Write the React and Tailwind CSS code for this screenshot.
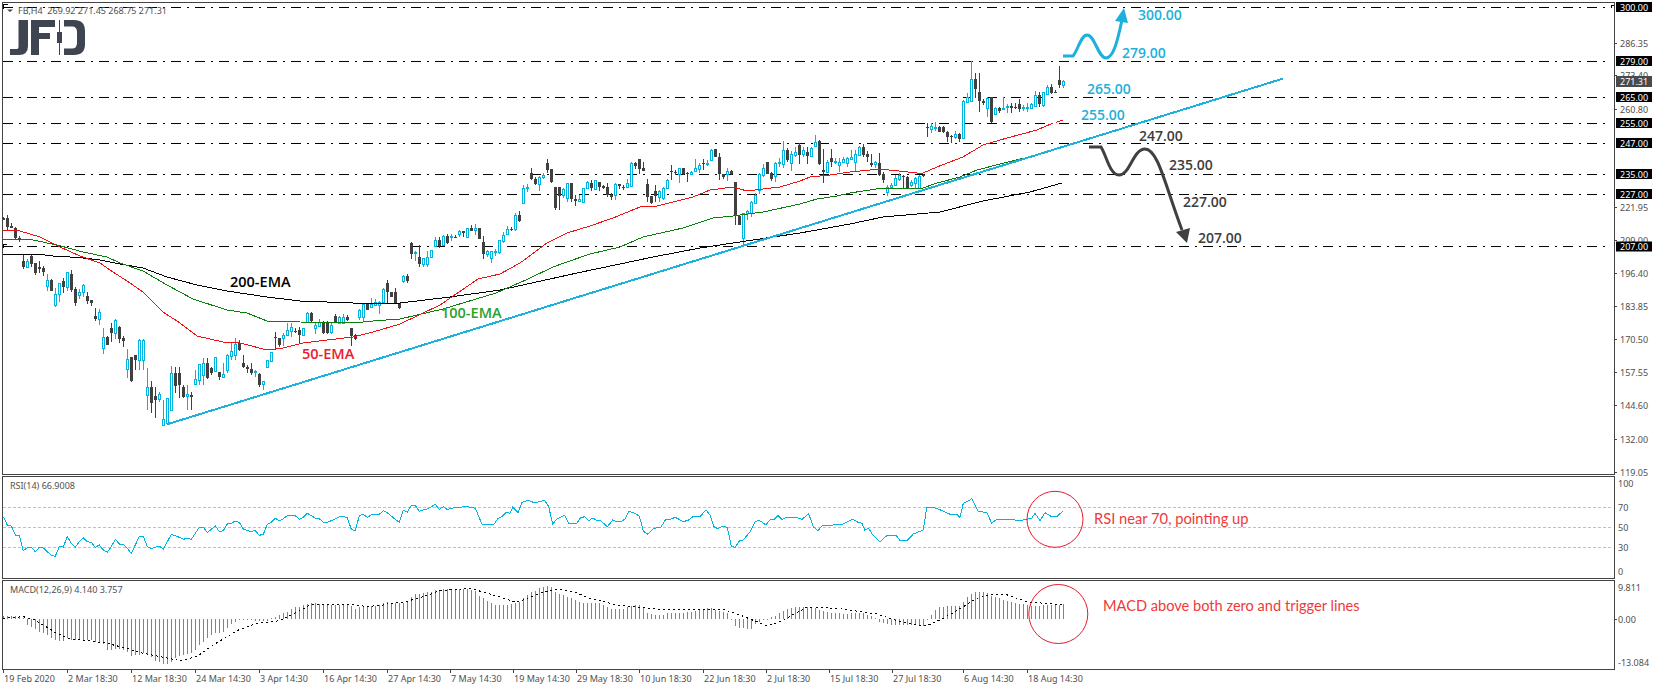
// Facebook H4 chart, traced from the reference. Traced numbers are in 3x crop units: x = ox + z/3, y = oy + z/3
const CYAN = "#00b4e0";
const DARK = "#404040";

const candleSegments = [
  { x0: 3, oy: 195, rows: [[0,66,68,74,76],[0,60,70,96,105],[0,84,94,99,100],[0,96,100,130,132],[0,122,129,131,140],[0,180,198,216,222],[1,192,198,215,218],[0,180,183,208,216],[0,205,205,233,240],[0,198,216,222,234],[0,214,219,231,243],[1,237,256,272,287],[0,252,255,288,288],[1,280,298,329,336],[1,265,265,298,320],[0,250,258,276,293],[1,232,232,275,288],[0,226,238,285,290],[0,276,282,323,333],[1,281,291,299,311],[1,266,270,290,306],[0,292,303,318,328],[0,316,316,323,333],[0,339,363,372,378],[1,342,352,371,389],[1,400,427,458,477],[0,422,427,449,450],[0,384,399,414,442],[1,372,376,413,432],[0,392,396,431,445],[0,422,429,437,456],[1,462,493,521,548]] },
  { x0: 131, oy: 260, rows: [[0,290,292,362,365],[0,285,285,300,330],[1,238,240,300,330],[1,238,240,300,330],[1,323,380,406,450],[0,362,380,430,460],[0,380,408,420,475],[1,395,402,416,425],[1,420,478,495,495],[1,415,415,490,495],[1,318,340,450,450],[0,320,340,378,400],[0,322,340,375,415],[0,375,380,410,415],[1,375,403,407,450],[0,395,405,412,450],[1,330,358,372,375],[1,312,312,360,375],[1,295,310,345,375],[0,295,310,355,358],[0,320,325,340,345],[1,290,290,333,335],[0,335,335,350,360],[1,310,343,350,350],[1,283,285,330,340],[1,250,272,288,300],[1,235,252,285,300],[0,240,248,270,272],[0,285,310,320,325],[0,315,320,328,340],[0,310,328,338,345],[1,330,333,337,350],[0,340,343,375,380],[1,363,363,373,390],[1,300,300,322,325],[1,275,275,302,305],[0,215,232,235,270],[0,235,235,255,262],[1,218,225,235,258],[1,190,210,225,228],[1,188,200,212,230],[0,205,212,214,220],[0,200,210,225,248],[1,205,205,225,225],[1,155,160,185,190],[0,155,160,182,185],[1,190,195,205,222],[1,178,185,197,200],[0,182,185,218,222],[0,182,185,218,222],[1,185,195,215,222],[0,162,168,187,190],[1,168,170,188,190],[1,162,170,188,190],[0,165,170,180,182],[0,203,205,228,258],[0,222,225,238,240],[1,148,150,172,180],[1,130,132,172,185],[0,130,132,150,150],[1,115,133,140,145],[1,118,125,136,136],[1,122,125,134,162],[1,85,87,125,128],[0,60,70,95,130],[0,97,97,110,112],[0,85,97,130,133],[0,130,130,145,148]] },
  { x0: 403, oy: 120, rows: [[1,465,468,482,490],[0,462,468,482,490],[0,365,368,402,418],[1,393,395,398,422],[0,375,411,432,440],[1,413,413,432,440],[1,393,410,432,440],[1,390,390,412,413],[1,350,360,378,380],[0,352,360,378,385],[1,345,348,375,378],[0,343,347,368,372],[1,342,347,350,362],[0,345,350,352,354],[1,330,334,341,352],[0,334,334,338,350],[1,325,325,350,350],[0,315,323,332,332],[1,312,325,329,345],[0,323,323,357,358],[0,348,366,402,418],[1,390,393,401,412],[1,393,393,413,430],[1,388,393,395,408],[1,360,360,395,403],[1,335,345,362,370],[1,318,327,342,345],[0,322,327,331,333],[1,278,286,328,332],[0,273,286,302,305],[1,195,205,250,252],[1,192,202,205,215],[0,145,160,177,180],[0,170,176,192,196],[1,168,170,193,212],[1,158,165,172,178],[0,118,130,150,160],[0,148,148,186,188],[0,200,202,263,270],[0,202,202,227,270],[1,205,208,225,235],[1,190,190,235,245],[0,190,190,238,245],[0,225,238,242,258],[1,225,238,243,247],[1,203,203,247,250],[1,182,187,204,208],[0,180,190,205,212],[1,180,180,206,208],[0,187,187,200,212],[0,195,197,203,208],[0,190,202,225,232],[0,220,225,230,240],[1,190,193,226,240],[0,193,193,198,208],[0,195,200,203,210],[1,178,190,202,205],[1,127,130,197,200],[0,125,130,138,148],[0,118,118,147,162],[0,125,145,152,152],[0,178,192,230,245],[0,228,228,248,252],[0,195,213,228,245],[1,210,214,230,245],[1,200,205,233,240],[1,178,180,205,207],[0,135,152,155,180],[0,150,155,158,165],[1,143,145,163,188],[0,145,145,163,165],[0,155,158,162,185],[1,153,157,163,165],[1,118,145,152,155],[1,130,135,147,160],[0,118,130,133,150],[1,120,130,133,138],[1,88,90,120,122],[0,88,88,110,112],[0,100,112,163,180],[0,163,163,170,178],[1,145,153,163,182],[0,150,153,162,165],[0,187,187,288,315],[0,288,288,315,315],[1,278,280,355,378],[1,270,273,280,300],[1,243,247,280,290],[1,220,225,248,250],[1,160,162,210,222],[1,133,145,165,170],[0,125,125,162,163]] },
  { x0: 771, oy: 110, rows: [[0,185,190,207,212],[1,155,160,197,215],[1,143,155,160,172],[1,93,120,163,175],[0,115,120,150,157],[1,123,133,160,182],[1,112,127,134,140],[0,100,105,135,162],[1,110,120,133,140],[0,110,125,137,162],[1,110,115,137,140],[1,75,95,107,110],[0,90,93,162,165],[0,118,181,185,218],[1,150,157,185,187],[0,118,145,157,170],[1,145,152,157,162],[1,145,155,166,187],[1,140,148,155,160],[1,140,145,158,170],[1,120,140,146,150],[1,120,133,155,187],[1,108,110,135,137],[0,102,110,135,140],[0,122,133,142,157],[0,133,160,165,170],[1,152,156,163,175],[0,130,160,195,198],[0,187,193,210,218],[1,225,230,247,258],[1,218,225,230,235],[1,195,205,225,228],[1,190,195,207,212]] },
  { x0: 903, oy: 40, rows: [[0,405,408,412,445],[0,407,410,445,445],[1,420,427,435,440],[1,412,415,430,445],[1,405,408,445,448],[0,403,405,408,412],[0,250,261,263,290],[1,250,258,268,280],[1,245,261,264,272],[0,258,260,275,276],[0,258,260,275,278],[0,272,275,290,305],[0,285,288,292,308],[1,272,283,290,296],[0,280,282,297,305],[1,180,183,295,298],[1,160,170,185,190],[1,63,118,183,185],[0,100,118,146,175],[0,100,155,183,215],[0,178,182,190,195],[1,172,175,203,232],[0,172,172,245,250],[1,200,205,222,225],[0,200,204,214,218],[1,170,203,205,208],[1,192,197,200,218],[0,190,197,203,218],[0,190,200,205,208],[0,178,193,207,215],[1,195,202,204,212],[1,190,200,205,217],[1,190,192,203,205],[1,152,165,197,200],[0,155,165,192,202],[1,155,157,196,200],[1,135,142,162,165],[0,132,142,160,162],[0,150,155,157,158],[0,78,120,135,143],[1,120,124,135,143]] },
];

const candles = candleSegments.flatMap(({ x0, oy, rows }) =>
  rows.map(([up, wt, bt, bb, wb], i) => ({
    x: x0 + i * 4,
    up: !!up,
    wt: Math.round(oy + wt / 3),
    bt: Math.round(oy + bt / 3),
    bb: Math.round(oy + bb / 3),
    wb: Math.round(oy + wb / 3),
  }))
);

const redEma = "3,230 20,231 40,237 60,247 80,256 100,263 110,270 130,283 143,292 163,312 180,323 197,336 223,342 240,343 267,350 283,348 303,343 327,340 353,337 373,332 400,324 440,305 478,279 500,274 520,263 547,243 567,233 590,226 613,218 640,207 657,206 693,197 710,190 733,187 747,191 763,189 780,187 800,181 810,177 830,175 850,172 880,169 917,173 923,173 937,167 963,157 983,145 1007,138 1037,130 1053,123";
const redEmaTail = "1056,122.5 1063,120";
const greenEma = "3,239 33,240 57,245 83,252 107,257 120,263 143,271 167,285 193,299 227,310 247,313 267,321 300,322 353,323 373,321 400,319 443,309 496,293 528,279 553,267 567,262 590,254 620,247 643,237 683,228 713,218 733,216 763,212 800,204 817,199 837,196 850,193 883,188 923,188 937,183 960,177 977,170 1000,164 1037,155 1063,146";
const blackEma = "3,255 10,254 37,254 53,256 70,257 83,258 100,260 120,264 143,268 167,277 197,285 227,291 267,297 300,301 353,303 400,303 450,297 500,290 550,279 577,273 620,264 653,257 700,248 733,243 800,233 850,224 883,217 940,212 983,201 1030,192 1062,183";

const trace = (ox, oy, flat) => {
  const out = [];
  for (let i = 0; i < flat.length; i += 2) out.push(`${(ox + flat[i] / 3).toFixed(1)},${(oy + flat[i + 1] / 3).toFixed(1)}`);
  return out.join(" ");
};

const rsiLine = [
  trace(0, 470, [10,140,22,165,34,168,46,195,58,197,70,242,82,233,94,232,106,245,118,232,130,234,142,245,154,255,166,259,178,230,190,231,202,200,214,220,226,232,238,215,250,203,262,215,274,217,286,232,298,225,310,240,322,247,334,230,346,208,358,222,370,223,382,235,394,250,406,225,418,198,430,198,442,230,454,236,466,232,478,228,490,238,514,193,526,197,538,202,550,208,562,205,574,208,586,190,598,172,610,172,622,187,634,178,646,167,658,185,670,182,682,162,694,160,706,153,718,157,730,177,742,182,754,184,766,182,778,196,790,193,802,163,814,157,826,145,838,153,850,146,862,137,874,135,886,137,898,148,910,142,922,130,934,137,946,144,958,146,970,157]),
  trace(0, 470, [982,157,994,152,1006,146,1018,140,1030,139,1042,143,1054,178,1066,182,1078,137,1090,133,1102,142,1114,135,1126,133,1138,133,1150,122,1162,128]),
  trace(390, 470, [12,145,28,157,40,120,52,127,64,106,76,106,88,124,100,120,112,117,124,110,136,103,148,118,160,110,172,119,184,115,196,113,208,113,220,110,232,110,248,113,256,115,276,163,288,163,312,163,324,145,336,140,348,127,360,130,368,112,384,128,396,97,416,91,432,98,448,95,464,91,476,110,488,163,500,147,524,136,536,160,548,162,560,160,572,143,584,140,596,152,608,144,620,151,632,152,652,170,668,150,680,156,692,155,704,148,716,125,728,127,748,138,760,183,772,193,792,175,812,172,828,147,840,148,856,142,880,155,896,150,908,140,932,138,948,119,960,135,972,170,984,176,1000,168,1012,172,1024,228,1036,232,1048,213,1060,210,1080,185,1096,155,1108,151,1128,165,1140,149,1152,149,1164,137,1176,148,1188,143,1220,143,1236,148,1256,131,1270,170,1284,182,1296,168,1320,166,1360,162,1388,147,1404,157,1416,160,1424,180,1436,175,1448,195,1470,215,1490,197,1518,195,1530,212]),
  trace(900, 470, [20,212,40,192,70,180,80,112,100,112,130,123,150,133,170,133,180,142,190,100,210,90,215,85,235,125,260,127,275,160,290,148,310,148,345,150,360,152,380,148,395,145,405,130,420,152,435,128,455,140,470,140,488,124]),
].join(" ");

const signalLine = [
  trace(0, 470, [10,445,70,440,100,448,130,465,170,490,210,507,270,512,320,520,380,535,420,548,470,558,540,572,590,560,640,525,710,482,770,460,840,452,880,432,930,405,1060,403,1100,410,1150,405]),
  trace(390, 470, [0,400,40,397,100,380,150,362,240,355,310,375,380,397,450,370,500,358,550,365,600,385,680,405,830,420,1000,418,1050,435,1130,467,1170,455,1250,412,1340,415,1460,432,1530,455]),
  trace(900, 470, [0,455,50,465,85,465,130,445,190,410,230,385,280,372,320,374,380,395,490,405]),
].join(" ");

const histSegments = [
  { x0: 3, vals: [437,437,437,438,440,443,465,470,478,485,490,495,505,510,512,512,505,510,510,510,510,510,510,515,520,522,540,540,538,538,540,545,558,555,555,550,553,560,572,575,582,582,575,565,558,555,552,550,540,525,515,505,495,490,488,485,475,462,455,451,451,451,451,452,452,452,452,445,440,435,430,425,418,412,410,405,403,400,400,402,405,405,405,405,405,405,405,408,418,412,410,408,408,408,405,398,396,398,400,400] },
  { x0: 403, vals: [400,395,380,372,372,370,367,366,360,360,358,358,357,357,357,357,358,360,362,378,385,392,398,405,405,405,405,403,398,395,385,375,365,362,355,352,348,350,365,372,375,380,385,390,397,398,398,398,400,400,405,410,416,416,416,418,410,408,405,405,415,428,432,435,436,435,430,428,428,428,428,425,425,423,420,420,415,413,420,423,425,428,447,468,473,475,477,477,463,455,450,448,442,437,430,422,418,415,412,410,412,410,412,415,420,423,427,428,428,430,431,431,430,428,428,430,435,437,445,455,460,462,465,465,465,465,465,465] },
  { x0: 915, vals: [465,465,468,450,435,420,412,410,408,408,408,408,395,382,372,365,365,367,370,378,380,385,390,393,397,400,402,403,405,407,408,408,405,405,405,405,405,402] },
];
const histBars = histSegments.flatMap(({ x0, vals }) =>
  vals.map((v, i) => ({ x: x0 + i * 4, y: 470 + v / 3 }))
);

const levels = [7, 61, 97, 123, 143, 174, 194, 246.5];

const priceScale = [
  [43, "286.35"], [75, "273.40"], [109, "260.80"], [207, "221.95"], [240, "209.00"], [273, "196.40"],
  [306, "183.85"], [339, "170.50"], [372, "157.55"], [405, "144.60"], [439, "132.00"], [472, "119.05"],
];
const priceTags = [[7, "300.00"], [61, "279.00"], [97, "265.00"], [123, "255.00"], [143, "247.00"], [174, "235.00"], [194, "227.00"], [246.5, "207.00"]];

const levelNotes = [
  [1138, 15, "300.00", "fill-[#1cb0dc]"], [1122, 53, "279.00", "fill-[#1cb0dc]"], [1087, 89, "265.00", "fill-[#1cb0dc]"], [1081, 115, "255.00", "fill-[#1cb0dc]"],
  [1139, 136, "247.00", "fill-[#3d3d3d]"], [1169, 165, "235.00", "fill-[#3d3d3d]"], [1183, 202, "227.00", "fill-[#3d3d3d]"], [1198, 238, "207.00", "fill-[#3d3d3d]"],
];
const emaNotes = [
  [230, 282, "200-EMA", "fill-black"], [441, 313, "100-EMA", "fill-[#2ba02b]"], [302, 354, "50-EMA", "fill-[#e8202c]"],
];

const dates = [
  [3, "19 Feb 2020"], [67, "2 Mar 18:30"], [131, "12 Mar 18:30"], [195, "24 Mar 14:30"], [259, "3 Apr 14:30"], [323, "16 Apr 14:30"], [387, "27 Apr 14:30"],
  [450, "7 May 14:30"], [513, "19 May 14:30"], [576, "29 May 18:30"], [639, "10 Jun 18:30"], [703, "22 Jun 18:30"], [766, "2 Jul 18:30"], [829, "15 Jul 18:30"],
  [892, "27 Jul 18:30"], [963, "6 Aug 14:30"], [1027, "18 Aug 14:30"],
];

function Candles() {
  return (
    <g shapeRendering="crispEdges">
      {candles.map((c) => {
        const color = c.up ? CYAN : DARK;
        const h = Math.max(c.bb - c.bt, 1);
        return (
          <g key={c.x} fill={color}>
            <rect x={c.x} y={c.wt} width="1" height={Math.max(c.wb - c.wt, 1)} />
            <rect x={c.x - 1} y={c.bt} width="3" height={h + (c.up ? 1 : 0)} />
            {c.up && h > 1 && <rect x={c.x} y={c.bt + 1} width="1" height={h - 1} fill="#fff" />}
          </g>
        );
      })}
    </g>
  );
}

function Logo() {
  return (
    <g fill="#3e4550">
      <path d="M18.5 20H28V46Q28 55 19 55H10V49H17Q18.5 49 18.5 47Z" />
      <path d="M31 20H55V27H39V33H50V39H39V55H31Z" />
      <rect x="59" y="20" width="1" height="35" />
      <rect x="57" y="32" width="5" height="11" />
      <path d="M64 20H74Q85 20 85 31V44Q85 55 74 55H64V48.5H72Q77 48.5 77 43V32Q77 26.5 72 26.5H64Z" />
    </g>
  );
}

function MainChart() {
  return (
    <svg viewBox="3 3 1611 471" className="block h-full w-full overflow-hidden">
      <Logo />
      <g stroke="#000" strokeWidth="1" strokeDasharray="10 6 2 6" shapeRendering="crispEdges">
        {levels.map((y) => (
          <line key={y} x1="3" x2="1611" y1={Math.floor(y) + 0.5} y2={Math.floor(y) + 0.5} />
        ))}
      </g>
      <path d="M3 248V244.5H7M1611 8V5.5H1614" fill="none" stroke="#000" shapeRendering="crispEdges" />
      <Candles />
      <g fill="none" strokeWidth="1" shapeRendering="crispEdges">
        <polyline points={blackEma} stroke="#000" />
        <polyline points={greenEma} stroke="#0a7d0a" />
        <polyline points={redEma} stroke="#f01010" />
        <polyline points={redEmaTail} stroke="#f01010" />
      </g>
      <line x1="168" y1="424" x2="1283" y2="78.6" stroke="#1cb0dc" strokeWidth="2" shapeRendering="crispEdges" />
      <path d="M1063 56H1073C1078 50 1081 35 1087 35C1095 35 1098 58 1106 58C1114 58 1118 38 1122 20" fill="none" stroke="#1cb0dc" strokeWidth="3" />
      <path d="M1124 8L1128 23L1115 21Z" fill="#1cb0dc" />
      <path d="M1089 147H1101C1107 157 1110 175 1119 175C1130 175 1133 149 1145 149C1158 149 1165 185 1182 230" fill="none" stroke={DARK} strokeWidth="3" />
      <path d="M1187 243L1176 232L1190 228Z" fill={DARK} />
      <g className="font-['Open_Sans'] text-[14px] font-semibold">
        {levelNotes.map(([x, y, label, color]) => (
          <text key={label} x={x} y={y + 5} className={color}>{label}</text>
        ))}
      </g>
      <g className="font-['Open_Sans'] text-[14.5px] font-semibold">
        {emaNotes.map(([x, y, label, color]) => (
          <text key={label} x={x} y={y + 5} className={color}>{label}</text>
        ))}
      </g>
      <path d="M3 9V4H8" fill="none" stroke="#000" shapeRendering="crispEdges" />
      <path d="M7 9.5H13L10 12Z" fill="#444" />
      <text x="18" y="14" xmlSpace="preserve" className="font-['Noto_Sans'] text-[9px] fill-[#505050]">FB,H4  269.92 271.45 268.75 271.31</text>
    </svg>
  );
}

function RsiChart() {
  return (
    <svg viewBox="3 477 1611 101" className="block h-full w-full overflow-hidden">
      <g stroke="#c0c0c0" strokeDasharray="3 2" shapeRendering="crispEdges">
        {[507.5, 527.5, 547.5].map((y) => (
          <line key={y} x1="3" x2="1612" y1={y} y2={y} />
        ))}
      </g>
      <polyline points={rsiLine} fill="none" stroke={CYAN} shapeRendering="crispEdges" />
      <circle cx="1055" cy="519.3" r="28" fill="none" stroke="#e8192c" />
      <text x="1094" y="524" className="font-['Lato'] text-[14.7px] fill-[#ee3a3a]">RSI near 70, pointing up</text>
      <text x="10" y="489" className="font-['Noto_Sans'] text-[9px] fill-[#505050]">RSI(14) 66.9008</text>
    </svg>
  );
}

function MacdChart() {
  return (
    <svg viewBox="3 581 1611 88" className="block h-full w-full overflow-hidden">
      <g fill="#1aa8cc" shapeRendering="crispEdges">
        {histBars.map((b) => (
          <rect key={b.x} x={b.x} y={Math.min(b.y, 619)} width="1" height={Math.max(Math.abs(b.y - 619), 1)} />
        ))}
      </g>
      <polyline points={signalLine} fill="none" stroke="#000" strokeDasharray="2 3" shapeRendering="crispEdges" />
      <circle cx="1058.3" cy="614" r="29.5" fill="none" stroke="#e8192c" />
      <text x="1103" y="611" className="font-['Lato'] text-[14.6px] fill-[#ee3a3a]">MACD above both zero and trigger lines</text>
      <text x="10" y="593" className="font-['Noto_Sans'] text-[9px] fill-[#505050]">MACD(12,26,9) 4.140 3.757</text>
    </svg>
  );
}

function PriceAxis() {
  return (
    <svg viewBox="1615 2 40 473" className="block h-full w-full overflow-visible font-['Noto_Sans'] text-[9px]">
      {priceScale.map(([y, label]) => (
        <g key={label}>
          <rect x="1615" y={y} width="2" height="1" fill="#444" />
          <text x="1620" y={y + 3.5} className="fill-[#505050]">{label}</text>
        </g>
      ))}
      <rect x="1616" y="76" width="36" height="11" fill="#4a4a4a" />
      <text x="1620" y="85" className="fill-white">271.31</text>
      {priceTags.map(([y, label]) => (
        <g key={label}>
          <rect x="1616" y={y - 5} width="36" height="10" fill="#000" />
          <text x="1620" y={y + 3.5} className="fill-white">{label}</text>
        </g>
      ))}
    </svg>
  );
}

function SideAxis({ viewBox, marks }) {
  return (
    <svg viewBox={viewBox} className="block h-full w-full overflow-visible font-['Noto_Sans'] text-[9px] fill-[#505050]">
      {marks.map(([y, label]) => (
        <text key={label} x="1618" y={y + 3.5}>{label}</text>
      ))}
      <rect x="1615" y="619" width="2" height="1" fill="#444" />
    </svg>
  );
}

function TimeAxis() {
  return (
    <svg viewBox="2 670 1613 20" className="block h-full w-full font-['Noto_Sans'] text-[9px] fill-[#505050]">
      {dates.map(([x, label]) => (
        <g key={label}>
          <rect x={x} y="670" width="1" height="3" fill="#444" />
          <text x={x + 1} y="682">{label}</text>
        </g>
      ))}
    </svg>
  );
}

export default function App() {
  return (
    <div className="flex h-[690px] w-[1655px] flex-col overflow-hidden bg-white pl-[2px] pt-[2px]">
      <div className="flex h-[473px]">
        <div className="w-[1613px] border border-[#444]"><MainChart /></div>
        <div className="w-[40px]"><PriceAxis /></div>
      </div>
      <div className="mt-px flex h-[103px]">
        <div className="w-[1613px] border border-[#444]"><RsiChart /></div>
        <div className="w-[40px]">
          <SideAxis viewBox="1615 476 40 103" marks={[[483, "100"], [507, "70"], [527, "50"], [547, "30"], [571, "0"]]} />
        </div>
      </div>
      <div className="mt-px flex h-[90px]">
        <div className="w-[1613px] border border-[#444]"><MacdChart /></div>
        <div className="w-[40px]">
          <SideAxis viewBox="1615 580 40 90" marks={[[587, "9.811"], [619, "0.00"], [662, "-13.084"]]} />
        </div>
      </div>
      <div className="h-[20px] w-[1613px]"><TimeAxis /></div>
    </div>
  );
}
